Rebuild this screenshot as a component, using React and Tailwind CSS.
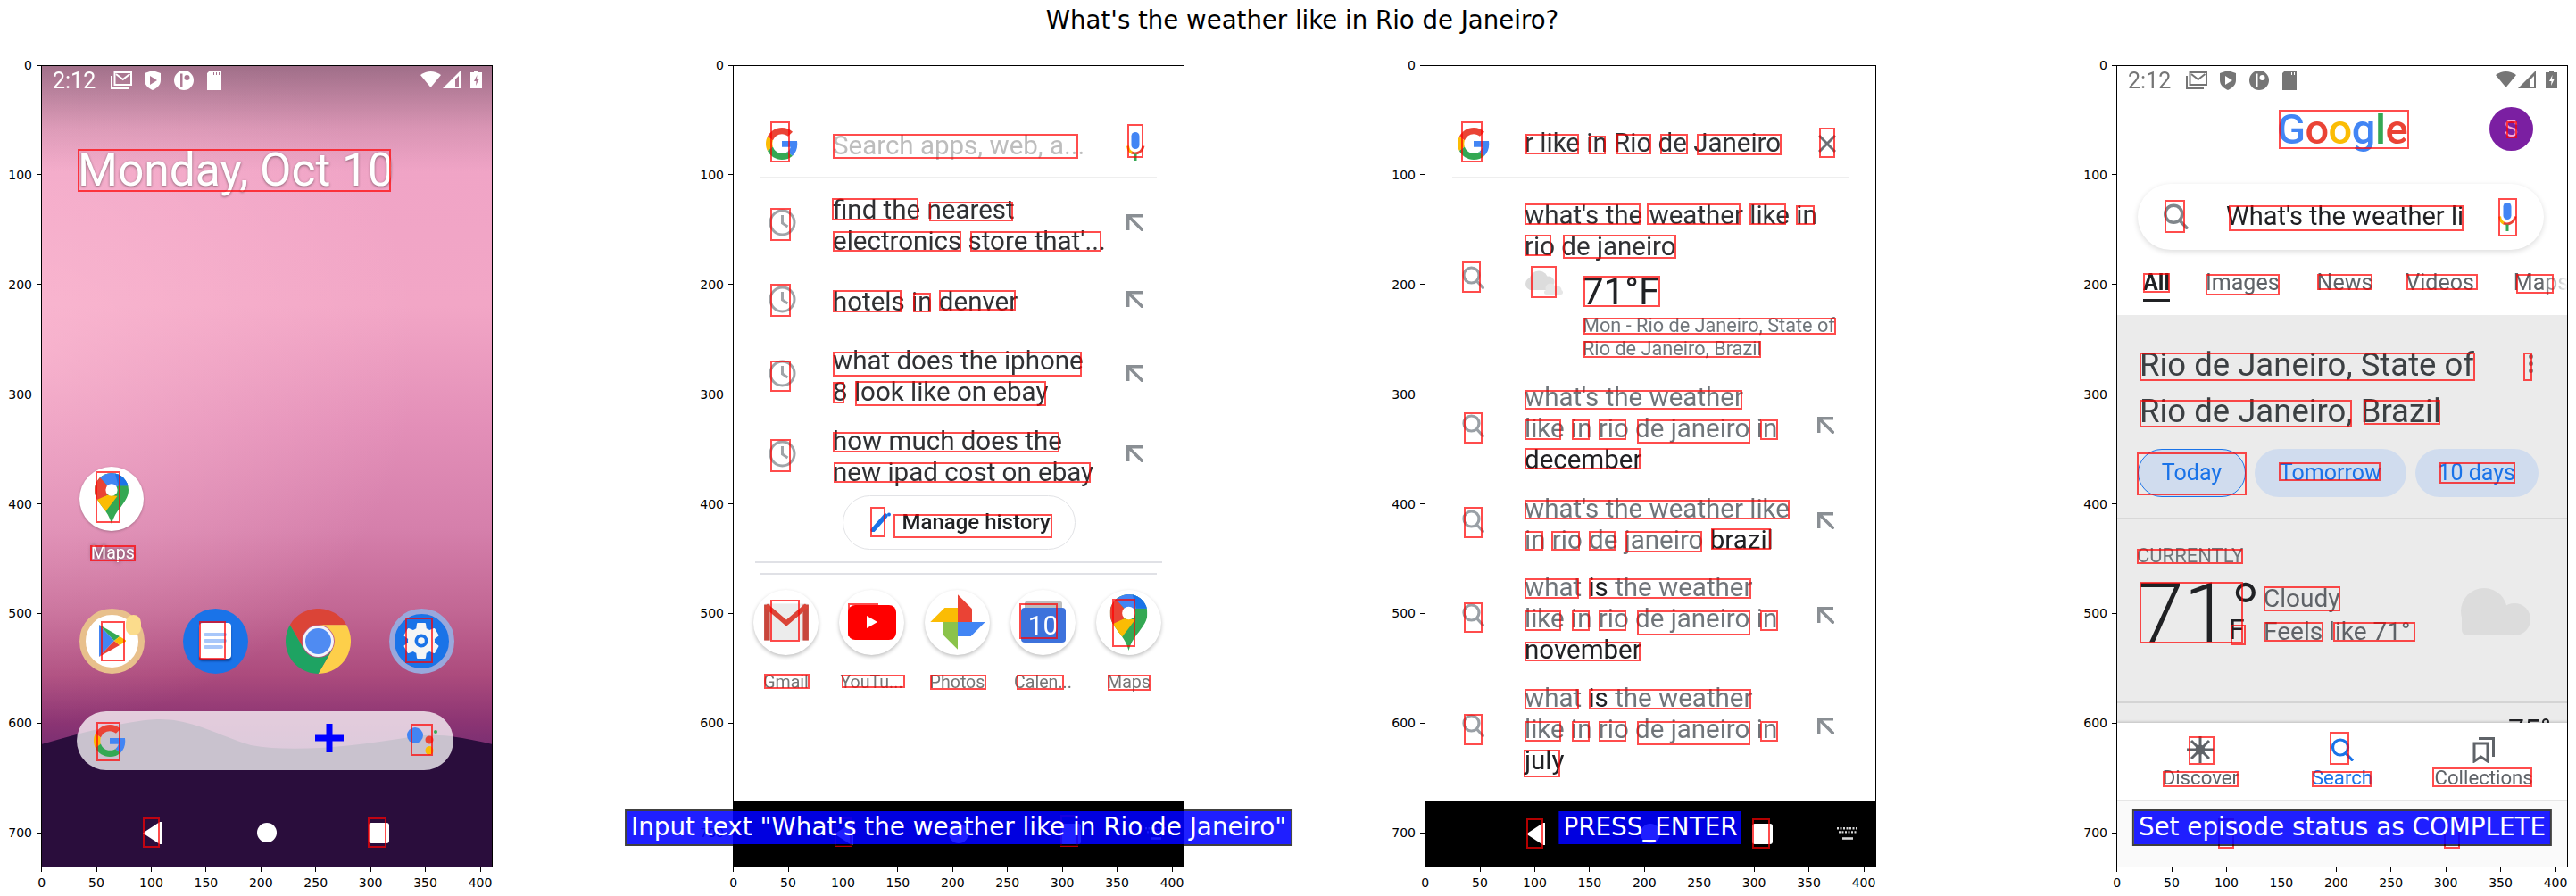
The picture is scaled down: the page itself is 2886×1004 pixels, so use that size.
import React, { useId } from "react";

const PANEL_TOP = 72.5;
const UNIT = 1.2285;

function GoogleG({ className }) {
  return (
    <svg viewBox="0 0 48 48" className={className}>
      <path fill="#EA4335" d="M24 9.5c3.54 0 6.71 1.22 9.21 3.6l6.85-6.85C35.9 2.38 30.47 0 24 0 14.62 0 6.51 5.38 2.56 13.22l7.98 6.19C12.43 13.72 17.74 9.5 24 9.5z" />
      <path fill="#4285F4" d="M46.98 24.55c0-1.57-.15-3.09-.38-4.55H24v9.02h12.94c-.58 2.96-2.26 5.48-4.78 7.18l7.73 6c4.51-4.18 7.09-10.36 7.09-17.65z" />
      <path fill="#FBBC05" d="M10.53 28.59c-.48-1.45-.76-2.99-.76-4.59s.27-3.14.76-4.59l-7.98-6.19C.92 16.46 0 20.12 0 24c0 3.88.92 7.54 2.56 10.78l7.97-6.19z" />
      <path fill="#34A853" d="M24 48c6.48 0 11.93-2.13 15.89-5.81l-7.73-6c-2.15 1.45-4.92 2.3-8.16 2.3-6.26 0-11.57-4.22-13.47-9.91l-7.98 6.19C6.51 42.62 14.62 48 24 48z" />
    </svg>
  );
}

function MapsPin({ className }) {
  const id = useId();
  return (
    <svg viewBox="0 0 40 60" className={className}>
      <clipPath id={id}>
        <path d="M20 0C9 0 0 9 0 20c0 8 4 13 9 20 5 6 9 12 11 20 2-8 6-14 11-20 5-7 9-12 9-20C40 9 31 0 20 0z" />
      </clipPath>
      <g clipPath={`url(#${id})`}>
        <rect width="40" height="60" fill="#34A853" />
        <polygon points="0,31 15,26 27,27 11,48 0,48" fill="#FBBC04" />
        <polygon points="0,0 7,5 15,15 15,26 0,33" fill="#EA4335" />
        <polygon points="6,5 18,-2 40,0 40,15 28,15 20,20" fill="#4285F4" />
        <polygon points="24,0 40,0 40,15 28,15" fill="#1A73E8" />
      </g>
      <circle cx="20" cy="20" r="7" fill="#fff" />
    </svg>
  );
}

function Mic({ className }) {
  return (
    <svg viewBox="0 0 22 32" className={className}>
      <rect x="6.5" y="0" width="9" height="19" rx="4.5" fill="#4285F4" />
      <path d="M8 23.5c-3-1-5-4-5.5-8" fill="none" stroke="#FBBC04" strokeWidth="3" />
      <path d="M7 23c4 2 11 1 13-7.5" fill="none" stroke="#EA4335" strokeWidth="3" />
      <rect x="9.5" y="24.5" width="3" height="7.5" fill="#34A853" />
    </svg>
  );
}

function SearchGlass({ className, stroke = "#9aa0a6" }) {
  return (
    <svg viewBox="0 0 25 26" className={className} fill="none" stroke={stroke} strokeWidth="3.2">
      <circle cx="10.5" cy="10.5" r="8.5" />
      <path d="M16.5 17l8 8.5" />
    </svg>
  );
}

function Clock() {
  return (
    <svg viewBox="0 0 31 31" className="w-[31px] h-[31px] shrink-0" fill="none" stroke="#a0a4a8" strokeWidth="3">
      <circle cx="15.5" cy="15.5" r="13.5" />
      <path d="M15.5 7v9l6 4" />
    </svg>
  );
}

function NwArrow() {
  return (
    <svg viewBox="0 0 19 19" className="w-[19px] h-[19px] shrink-0" fill="none" stroke="#8a8f94" strokeWidth="3.5">
      <path d="M1.7 18V1.7H18M1.7 1.7L18.5 18.5" />
    </svg>
  );
}

function Cloud({ className }) {
  return (
    <svg viewBox="0 0 78 53" className={className} fill="#dcdcdc">
      <circle cx="26" cy="26" r="26" />
      <circle cx="60" cy="35" r="18" />
      <rect x="1" y="28" width="59" height="25" rx="6" />
    </svg>
  );
}

function StatusBar({ tone }) {
  return (
    <div className={`flex items-center h-[35px] pl-[13px] pr-[12px] ${tone}`}>
      <span className="w-[65px] text-[25px] leading-[35px]">2:12</span>
      <svg viewBox="0 0 24 20" className="w-[24px] h-[20px] mr-[14px]" fill="none" stroke="currentColor" strokeWidth="2">
        <path d="M1 5v14h19" />
        <rect x="4.5" y="1" width="18.5" height="14" />
        <path d="M6 3l7.7 6 7.7-6" />
      </svg>
      <svg viewBox="0 0 18 22" className="w-[18px] h-[22px] mr-[15px]" fill="currentColor">
        <path fillRule="evenodd" d="M9 0l9 3v8c0 6-5 9-9 11-4-2-9-5-9-11V3z M6 6v10l8-5z" />
      </svg>
      <svg viewBox="0 0 22 22" className="w-[22px] h-[22px] mr-[15px]" fill="currentColor">
        <path fillRule="evenodd" d="M11 0a11 11 0 1 1 0 22a11 11 0 1 1 0-22z M7 3.5v15h2.5v-15z M14.5 5a3 3 0 1 0 0 6a3 3 0 1 0 0-6z" />
      </svg>
      <svg viewBox="0 0 16 22" className="w-[16px] h-[22px]" fill="currentColor">
        <path fillRule="evenodd" d="M3 0h13v22H0V3z M7 2v3h1V2z M10 2v3h1V2z M13 2v3h1V2z" />
      </svg>
      <div className="ml-auto flex items-center mb-[3px]">
        <svg viewBox="0 0 23 19" className="w-[23px] h-[19px] mr-[2px]" fill="currentColor">
          <path d="M0 5Q11.5-3 23 5L11.5 19z" />
        </svg>
        <svg viewBox="0 0 20 20" className="w-[20px] h-[20px] mr-[11px]" fill="currentColor">
          <path fillRule="evenodd" d="M20 0v20H0z M18 6v12h-4V10z" />
        </svg>
        <svg viewBox="0 0 13 20" className="w-[13px] h-[20px]" fill="currentColor">
          <path fillRule="evenodd" d="M4 0h5v2h4v18H0V2h4z M7.5 5L4 12h2.5L6 17l3.5-7H7z" />
        </svg>
      </div>
    </div>
  );
}

function NavKeys({ keyboard }) {
  return (
    <div className="flex items-center pl-[114px] h-full">
      <svg viewBox="0 0 21 25" className="w-[21px] h-[25px]" fill="#fff">
        <path d="M0 12.5L19 0h2v25h-2z" />
      </svg>
      <div className="w-[22px] h-[22px] rounded-full bg-white ml-[107px]" />
      <div className="w-[23px] h-[23px] rounded-[3px] bg-white ml-[103px]" />
      {keyboard && (
        <svg viewBox="0 0 24 14" className="w-[24px] h-[14px] ml-[72px]" fill="none" stroke="#d8d8d8">
          <path strokeWidth="2.4" strokeDasharray="2 1.5" d="M0 1.2h24M2 5.4h21" />
          <path strokeWidth="2.6" d="M6 12.5h12" />
        </svg>
      )}
    </div>
  );
}

function Panel({ left, boxes, caption, marker, children }) {
  return (
    <div className="relative w-[506px] h-[899px] shrink-0">
      <div className="w-full h-full overflow-hidden">{children}</div>
      {boxes.map((b, i) => (
        <div
          key={i}
          className="absolute border-2 border-[#ff0000]/70"
          style={{ left: b[0] - left, top: b[1] - PANEL_TOP, width: b[2] - b[0], height: b[3] - b[1] }}
        />
      ))}
      {marker}
      <div className="absolute inset-0 border border-black pointer-events-none" />
      {[0, 100, 200, 300, 400, 500, 600, 700].map((v) => (
        <div key={v} className="absolute right-full flex items-center h-[14px] -mt-[7px]" style={{ top: 0.6 + v * UNIT }}>
          <span className="text-[14px] leading-[14px] text-black mr-[5px] font-['DejaVu_Sans',sans-serif]">{v}</span>
          <div className="w-[5px] h-px bg-black" />
        </div>
      ))}
      {[0, 50, 100, 150, 200, 250, 300, 350, 400].map((v) => (
        <div key={v} className="absolute top-full flex flex-col items-center w-[40px] -ml-[20px]" style={{ left: 0.6 + v * UNIT }}>
          <div className="w-px h-[5px] bg-black" />
          <span className="text-[14px] leading-[14px] text-black mt-[5px] font-['DejaVu_Sans',sans-serif]">{v}</span>
        </div>
      ))}
      {caption && (
        <div className="absolute left-1/2 -translate-x-1/2 top-[834px] h-[41px] flex items-center px-[5px] border-2 border-black/75 bg-[rgba(0,0,255,0.88)] bg-clip-padding text-white text-[27.8px] leading-[38px] whitespace-nowrap font-['DejaVu_Sans',sans-serif]">
          {caption}
        </div>
      )}
    </div>
  );
}

function HomeScreen() {
  return (
    <div className="relative w-full h-full blur-[0.5px] bg-[linear-gradient(180deg,rgba(70,50,70,0.45)_0px,rgba(70,50,70,0.12)_70px,rgba(70,50,70,0)_120px),radial-gradient(ellipse_420px_420px_at_0px_320px,rgba(255,195,215,0.55),rgba(255,195,215,0)),linear-gradient(180deg,#e89fbe_0%,#f0a4c6_12%,#f2a6c6_30%,#e38fb8_45%,#d57fab_58%,#c26794_68%,#ac4b7d_76%,#8b3473_82%,#6a2a72_88%,#5a2466_100%)]">
      <svg viewBox="0 0 506 899" className="absolute inset-0 w-full h-full">
        <path d="M0 761C40 750 90 735 130 733C170 732 200 752 235 762C280 770 340 765 420 752C450 748 480 755 506 761V899H0z" fill="#2a0d3c" />
      </svg>
      <div className="relative flex flex-col h-full">
        <StatusBar tone="text-white" />
        <div className="mt-[59px] pl-[41px] h-[48px] leading-[48px] text-[51.5px] text-white [text-shadow:0_1px_3px_rgba(0,0,0,0.45)]">Monday, Oct 10</div>
        <div className="mt-[308px] ml-[43px] w-[72px] h-[72px] rounded-full bg-white flex items-center justify-center shadow-[0_1px_3px_rgba(0,0,0,0.25)]">
          <MapsPin className="w-[38px] h-[57px]" />
        </div>
        <div className="mt-[16px] ml-[43px] w-[75px] h-[18px] text-center leading-[18px] text-[19.6px] text-white [text-shadow:0_0_5px_rgba(0,0,0,0.7)]">Maps</div>
        <div className="mt-[53px] pl-[43px] flex gap-[42.5px]">
          <div className="relative w-[73px] h-[73px] rounded-full bg-white border-[7px] border-[#e8c08c] flex items-center justify-center">
            <svg viewBox="0 0 30 36" className="w-[30px] h-[36px]">
              <polygon points="0,0 17,18 0,36" fill="#4285F4" />
              <polygon points="0,0 23,13 17,18" fill="#34A853" />
              <polygon points="0,36 23,23 17,18" fill="#EA4335" />
              <polygon points="23,13 31,18 23,23 17,18" fill="#FBBC04" />
            </svg>
            <div className="absolute right-[-3px] top-[0px] w-[17px] h-[23px] rounded-full bg-[#fbdc8c]" />
          </div>
          <div className="w-[73px] h-[73px] rounded-full bg-[#1a73e8] flex items-center justify-center">
            <div className="w-[36px] h-[40px] rounded-[4px] bg-white flex flex-col justify-center gap-[3px] px-[5px] shadow-[0_3px_2px_rgba(0,30,90,0.5)]">
              <div className="h-[4px] rounded bg-[#a8c7fa]" />
              <div className="h-[4px] rounded bg-[#a8c7fa]" />
              <div className="h-[4px] rounded bg-[#a8c7fa] mr-[4px]" />
            </div>
          </div>
          <svg viewBox="0 0 48 48" className="w-[73px] h-[73px]">
            <path fill="#DB4437" d="M3.2 12A24 24 0 0 1 44.8 12H24A12 12 0 0 0 13.6 30z" />
            <path fill="#FDCF4A" d="M44.8 12A24 24 0 0 1 24 48L34.4 30A12 12 0 0 0 24 12z" />
            <path fill="#1EA362" d="M24 48A24 24 0 0 1 3.2 12L13.6 30A12 12 0 0 0 34.4 30z" />
            <circle cx="24" cy="24" r="11.5" fill="#f4f4f8" />
            <circle cx="24" cy="24" r="9.5" fill="#4F8BF2" />
          </svg>
          <div className="w-[73px] h-[73px] rounded-full bg-[#1a73e8] border-[6px] border-[#99a8dc] flex items-center justify-center">
            <svg viewBox="0 0 24 24" className="w-[50px] h-[50px]">
              <path fill="#f5f5f5" fillRule="evenodd" d="M19.14 12.94c.04-.3.06-.61.06-.94 0-.32-.02-.64-.07-.94l2.03-1.58a.49.49 0 0 0 .12-.61l-1.92-3.32a.49.49 0 0 0-.59-.22l-2.39.96c-.5-.38-1.03-.7-1.62-.94l-.36-2.54a.48.48 0 0 0-.48-.41h-3.84c-.24 0-.43.17-.47.41l-.36 2.54c-.59.24-1.13.57-1.62.94l-2.39-.96a.49.49 0 0 0-.59.22L2.74 8.87c-.12.21-.08.47.12.61l2.03 1.58c-.05.3-.09.63-.09.94s.02.64.07.94l-2.03 1.58a.49.49 0 0 0-.12.61l1.92 3.32c.12.22.37.29.59.22l2.39-.96c.5.38 1.03.7 1.62.94l.36 2.54c.05.24.24.41.48.41h3.84c.24 0 .44-.17.47-.41l.36-2.54c.59-.24 1.13-.56 1.62-.94l2.39.96c.22.08.47 0 .59-.22l1.92-3.32c.12-.22.07-.47-.12-.61l-2.01-1.58zM12 15.6A3.6 3.6 0 1 1 12 8.4a3.6 3.6 0 0 1 0 7.2z" />
              <circle cx="12" cy="12" r="1.8" fill="#f5f5f5" />
            </svg>
          </div>
        </div>
        <div className="mt-[42px] ml-[40px] w-[422px] h-[66px] rounded-full bg-white/75 flex items-center pl-[19px] pr-[18px]">
          <GoogleG className="w-[36px] h-[36px]" />
          <svg viewBox="0 0 34 32" className="w-[34px] h-[32px] ml-auto">
            <circle cx="9" cy="10" r="9" fill="#4285F4" />
            <circle cx="25" cy="15" r="4.5" fill="#EA4335" />
            <ellipse cx="25" cy="27" rx="4.5" ry="5" fill="#FBBC04" />
            <circle cx="32" cy="6" r="2" fill="#34A853" />
          </svg>
        </div>
        <div className="h-[47px] mt-[47px]">
          <NavKeys />
        </div>
      </div>
    </div>
  );
}

function AppTile({ label, children }) {
  return (
    <div className="flex flex-col items-center w-[73px]">
      <div className="w-[73px] h-[73px] rounded-full bg-white flex items-center justify-center shadow-[0_2px_4px_rgba(0,0,0,0.25)]">{children}</div>
      <div className="mt-[22px] h-[18px] leading-[18px] text-[19.6px] text-[#757575] whitespace-nowrap">{label}</div>
    </div>
  );
}

function Suggestion({ mt, lines }) {
  return (
    <div className={`flex items-center pl-[40px] pr-[46px] ${mt}`}>
      <div className="mb-[6px]"><Clock /></div>
      <div className="ml-[41px] text-[29.5px] leading-[35px] text-[#303134] whitespace-nowrap">
        {lines.map((l) => <div key={l}>{l}</div>)}
      </div>
      <div className="ml-auto mb-[6px]"><NwArrow /></div>
    </div>
  );
}

function DrawerScreen() {
  return (
    <div className="flex flex-col w-full h-full bg-white blur-[0.5px]">
      <div className="mx-[31px] h-[127px] border-b-[2px] border-[#eeeeee] pt-[70px]">
        <div className="flex items-center h-[36px] pl-[6px] pr-[13px]">
          <GoogleG className="w-[36px] h-[36px]" />
          <span className="ml-[39px] mt-[6px] text-[29.5px] text-[#bdbdbd] whitespace-nowrap">Search apps, web, a...</span>
          <Mic className="w-[22px] h-[32px] ml-auto mt-[6px]" />
        </div>
      </div>
      <Suggestion mt="mt-[18px]" lines={["find the nearest", "electronics store that'..."]} />
      <Suggestion mt="mt-[32px]" lines={["hotels in denver"]} />
      <Suggestion mt="mt-[30px]" lines={["what does the iphone", "8 look like on ebay"]} />
      <Suggestion mt="mt-[20px]" lines={["how much does the", "new ipad cost on ebay"]} />
      <div className="mx-auto mt-[8px] w-[261px] h-[61px] rounded-full border-[1.5px] border-[#e2e3e6] flex items-center pl-[30px]">
        <svg viewBox="0 0 23 22" className="w-[23px] h-[22px]">
          <path d="M3 20L17 4" stroke="#1a73e8" strokeWidth="5" strokeLinecap="round" />
          <circle cx="21" cy="2.5" r="2" fill="#1a73e8" />
        </svg>
        <span className="ml-[13px] text-[24px] font-medium text-[#202124] whitespace-nowrap">Manage history</span>
      </div>
      <div className="mt-[13px] mx-[25px] border-t-[2px] border-[#e0e1e6]" />
      <div className="mt-[11px] mx-[31px] border-t-[2px] border-[#e0e1e6]" />
      <div className="mt-[17px] pl-[23px] flex gap-[23px]">
        <AppTile label="Gmail">
          <svg viewBox="0 0 48 40" className="w-[52px] h-[44px]">
            <rect x="2" y="1" width="44" height="38" fill="#ececec" />
            <rect x="1" y="2" width="6" height="37" fill="#c8463c" />
            <rect x="41" y="2" width="6" height="37" fill="#c8463c" />
            <path d="M3 3l21 18L45 3" fill="none" stroke="#db4437" strokeWidth="5" />
          </svg>
        </AppTile>
        <AppTile label="YouTu...">
          <div className="w-[54px] h-[39px] rounded-[8px] bg-[#ff0000] flex items-center justify-center">
            <svg viewBox="0 0 12 14" className="w-[12px] h-[14px]"><path d="M0 0l12 7-12 7z" fill="#fff" /></svg>
          </div>
        </AppTile>
        <AppTile label="Photos">
          <svg viewBox="0 0 48 48" className="w-[64px] h-[64px]">
            <path fill="#EA4335" d="M24 24V1L36 13V24z" />
            <path fill="#4285F4" d="M24 24H47L35 36H24z" />
            <path fill="#8BC34A" d="M24 24V47L12 35V24z" />
            <path fill="#FBBC04" d="M24 24H1L13 12H24z" />
          </svg>
        </AppTile>
        <AppTile label="Calen...">
          <div className="w-[50px] h-[46px] flex flex-col">
            <div className="h-[7px] mx-[4px] bg-[#bdbdbd] rounded-t-[2px]" />
            <div className="flex-1 rounded-[4px] bg-[#3d72dc] flex items-center justify-center text-white text-[30px] leading-[30px]">10</div>
          </div>
        </AppTile>
        <AppTile label="Maps">
          <MapsPin className="w-[43px] h-[63px]" />
        </AppTile>
      </div>
      <div className="mt-auto h-[75px] bg-black"><NavKeys keyboard /></div>
    </div>
  );
}

function ResultRow({ mt, children }) {
  return (
    <div className={`flex items-center pl-[42px] pr-[47px] ${mt}`}>
      <div className="mb-[8px]"><SearchGlass className="w-[25px] h-[26px]" /></div>
      <div className="ml-[45px] text-[29.5px] leading-[35px] text-[#70757a] whitespace-nowrap">{children}</div>
      <div className="ml-auto mb-[8px]"><NwArrow /></div>
    </div>
  );
}

const Dark = ({ children }) => <span className="text-[#202124]">{children}</span>;

function TypingScreen() {
  return (
    <div className="flex flex-col w-full h-full bg-white blur-[0.5px]">
      <div className="mx-[31px] h-[127px] border-b-[2px] border-[#eeeeee] pt-[70px]">
        <div className="flex items-center h-[36px] pl-[6px] pr-[14px]">
          <GoogleG className="w-[36px] h-[36px]" />
          <span className="ml-[39px] text-[29.5px] text-[#303134] whitespace-nowrap">r like in Rio de Janeiro</span>
          <svg viewBox="0 0 20 20" className="w-[20px] h-[20px] ml-auto" fill="none" stroke="#6c7075" strokeWidth="3">
            <path d="M1 1l18 18M19 1L1 19" />
          </svg>
        </div>
      </div>
      <div className="flex items-center pl-[42px] mt-[24px]">
        <div className="mb-[6px]"><SearchGlass className="w-[25px] h-[26px]" /></div>
        <div className="ml-[45px] whitespace-nowrap">
          <div className="text-[29.5px] leading-[35px] text-[#303134]">
            <div>what's the weather like in</div>
            <div>rio de janeiro</div>
          </div>
          <div className="flex mt-[8px]">
            <svg viewBox="0 0 44 28" className="w-[44px] h-[28px] mt-[1px]">
              <g fill="#dcdcdc">
                <circle cx="16" cy="11" r="10.5" />
                <circle cx="8" cy="15" r="7" />
                <circle cx="27" cy="13" r="6.5" />
                <rect x="4" y="12" width="28" height="10" rx="4" />
              </g>
              <g fill="#e6e6e6">
                <circle cx="29" cy="20" r="5.5" />
                <circle cx="37" cy="22" r="4.5" />
                <rect x="22" y="22" width="21" height="5" rx="2.5" />
              </g>
            </svg>
            <div className="ml-[21px]">
              <div className="text-[42px] leading-[50px] text-[#202124]">71°F</div>
              <div className="text-[21.7px] leading-[26px] text-[#70757a]">Mon - Rio de Janeiro, State of</div>
              <div className="text-[21.7px] leading-[26px] text-[#70757a]">Rio de Janeiro, Brazil</div>
            </div>
          </div>
        </div>
      </div>
      <ResultRow mt="mt-[24.5px]">
        <div>what's the weather</div>
        <div>like in rio de janeiro in</div>
        <Dark>december</Dark>
      </ResultRow>
      <ResultRow mt="mt-[19.5px]">
        <div>what's the weather like</div>
        <div>in rio de janeiro <Dark>brazil</Dark></div>
      </ResultRow>
      <ResultRow mt="mt-[18px]">
        <div>what <Dark>is</Dark> the weather</div>
        <div>like in rio de janeiro in</div>
        <Dark>november</Dark>
      </ResultRow>
      <ResultRow mt="mt-[19px]">
        <div>what <Dark>is</Dark> the weather</div>
        <div>like in rio de janeiro in</div>
        <Dark>july</Dark>
      </ResultRow>
      <div className="mt-auto h-[75px] bg-black"><NavKeys keyboard /></div>
    </div>
  );
}

function Chip({ w, active, children }) {
  return (
    <div className={`${w} h-[54px] rounded-[27px] bg-[#d0dcee] flex items-center justify-center text-[25px] text-[#1a73e8] ${active}`}>{children}</div>
  );
}

function NavTab({ label, tone, children }) {
  return (
    <div className="flex flex-col items-center">
      <div className="h-[32px] flex items-center justify-center">{children}</div>
      <div className={`mt-[3px] h-[24px] leading-[24px] text-[22.2px] ${tone}`}>{label}</div>
    </div>
  );
}

function ResultsScreen() {
  return (
    <div className="flex flex-col w-full h-full bg-white blur-[0.5px]">
      <StatusBar tone="text-[#757575]" />
      <div className="mt-[12px] h-[49px] grid grid-cols-[1fr_auto_1fr] items-center">
        <div />
        <div className="text-[47px] leading-[49px] tracking-[-0.5px] font-medium">
          <span className="text-[#4285f4]">G</span>
          <span className="text-[#ea4335]">o</span>
          <span className="text-[#fbbc05]">o</span>
          <span className="text-[#4285f4]">g</span>
          <span className="text-[#34a853]">l</span>
          <span className="text-[#ea4335]">e</span>
        </div>
        <div className="flex justify-end pr-[39px]">
          <div className="w-[49px] h-[49px] rounded-full bg-[#7b1fa2] text-[#f5a5d5] flex items-center justify-center text-[26px]">S</div>
        </div>
      </div>
      <div className="mt-[37px] ml-[24px] w-[455px] h-[74px] shrink-0 rounded-full bg-white shadow-[0_2px_6px_rgba(0,0,0,0.14)] flex items-center pl-[28px]">
        <SearchGlass className="w-[29px] h-[29px]" stroke="#80868b" />
        <div className="ml-[42px] w-[266px] overflow-hidden whitespace-nowrap text-[29px] text-[#202124]">What's the weather like in Rio</div>
        <Mic className="ml-[38px] w-[22px] h-[32px]" />
      </div>
      <div className="relative h-[73px] shrink-0 pt-[22px] pl-[30px] flex text-[25px] leading-[30px] text-[#5f6368] overflow-hidden">
        <div className="font-bold text-[#202124] h-[37px]">
          <div>All</div>
          <div className="mt-[3px] h-[3.5px] bg-[#202124]" />
        </div>
        <div className="ml-[40px]">Images</div>
        <div className="ml-[42px]">News</div>
        <div className="ml-[37px]">Videos</div>
        <div className="ml-[44px]">Maps</div>
        <div className="absolute right-0 top-0 bottom-0 w-[30px] bg-gradient-to-r from-white/0 to-white" />
      </div>
      <div className="h-[457px] shrink-0 bg-[#ebebeb] overflow-hidden">
        <div className="mt-[30px] px-[26px] flex">
          <div className="text-[36.5px] leading-[52px] text-[#3c4043]">
            <div>Rio de Janeiro, State of</div>
            <div>Rio de Janeiro, Brazil</div>
          </div>
          <div className="ml-auto mr-[13px] mt-[14px] flex flex-col gap-[3px] h-[22px]">
            <div className="w-[5px] h-[5px] rounded-full bg-[#80868b]" />
            <div className="w-[5px] h-[5px] rounded-full bg-[#80868b]" />
            <div className="w-[5px] h-[5px] rounded-full bg-[#80868b]" />
          </div>
        </div>
        <div className="mt-[16px] pl-[24px] flex gap-[9.5px]">
          <Chip w="w-[121px]" active="border-[1.5px] border-[#1a73e8]">Today</Chip>
          <Chip w="w-[170.5px]" active="">Tomorrow</Chip>
          <Chip w="w-[138.5px]" active="">10 days</Chip>
        </div>
        <div className="mt-[23px] border-t-[2px] border-[#d8d8d8]" />
        <div className="mt-[31px] pl-[23px] h-[20px] leading-[20px] text-[22px] text-[#70757a]">CURRENTLY</div>
        <div className="mt-[8px] flex pl-[24px]">
          <div className="relative w-[141px] h-[93px] text-[93px] leading-[93px] font-light text-[#202124]">
            71°
            <span className="absolute left-[102px] top-[48px] text-[32px] leading-[32px] font-normal">F</span>
          </div>
          <div className="mt-[11px] text-[28px] leading-[37px] text-[#5f6368] whitespace-nowrap">
            <div>Cloudy</div>
            <div>Feels like 71°</div>
          </div>
          <Cloud className="ml-auto mr-[42px] mt-[18px] w-[78px] h-[53px]" />
        </div>
        <div className="mt-[52px] border-t-[2px] border-[#d4d4d4]" />
        <div className="mt-[13px] pr-[19px] text-right text-[32px] leading-[32px] text-[#202124]">75°</div>
      </div>
      <div className="relative h-[86px] shrink-0 bg-white shadow-[0_-1px_3px_rgba(0,0,0,0.2)] grid grid-cols-3 px-[15px] pt-[14px]">
        <NavTab label="Discover" tone="text-[#5f6368]">
          <svg viewBox="0 0 30 30" className="w-[30px] h-[30px]" fill="none" stroke="#5f6368" strokeWidth="3">
            <path d="M15 0v30M0 15h30M5 5l20 20M25 5L5 25" />
            <circle cx="15" cy="15" r="4" fill="#5f6368" />
          </svg>
        </NavTab>
        <NavTab label="Search" tone="text-[#1a73e8]">
          <SearchGlass className="w-[26px] h-[26px]" stroke="#1a73e8" />
        </NavTab>
        <NavTab label="Collections" tone="text-[#5f6368]">
          <svg viewBox="0 0 25 31" className="w-[25px] h-[31px]" fill="none" stroke="#5f6368" strokeWidth="3">
            <path d="M2 9h15v20l-7.5-5L2 29z" />
            <path d="M7 3.5h16.5V24" />
          </svg>
        </NavTab>
      </div>
      <div className="flex-1 bg-[#fafafa] border-t border-[#eeeeee]"><NavKeys /></div>
    </div>
  );
}

const homeBoxes = [
  [87, 167, 438, 215], [107, 528, 134.5, 586], [101, 611, 151.5, 629], [113, 696, 140, 741],
  [223, 696, 253, 739], [454, 692, 485, 743], [108, 809, 134.5, 853], [459.6, 811, 485, 847],
  [160, 916, 178.6, 950], [412, 916, 432.5, 950],
];

const drawerBoxes = [
  [862.6, 136, 885.5, 182], [933, 150, 1208, 178], [1262.5, 139, 1281, 177],
  [863, 233, 885.5, 270], [931.5, 222, 1028.6, 247], [1040.5, 226, 1134.7, 248], [933, 259, 1076.5, 282], [1087, 259, 1234, 282],
  [863, 318, 885.5, 355], [933, 325, 1009.5, 350], [1023, 328, 1043, 350], [1052, 325, 1138, 348],
  [863, 404, 885.5, 439], [933, 394, 1211.6, 422], [933, 428, 946, 452], [958, 427, 1172, 455],
  [863, 492, 885.5, 529], [933, 484, 1187, 507], [933.6, 518, 1222, 541],
  [975.4, 568, 992, 602], [1001.4, 576, 1179.5, 603],
  [862.6, 671.7, 896, 719], [950, 676, 983.6, 712.7], [1142, 676, 1184.6, 716], [1246, 671, 1272, 725],
  [855.5, 755, 906.5, 772], [943, 756, 1013.7, 771], [1041.7, 756, 1105.5, 772.7], [1138.7, 756, 1191.7, 772.7], [1240.7, 756, 1288.7, 773.7],
  [934.6, 916, 954, 949], [1187.6, 913, 1208, 948.7],
];

const typingBoxes = [
  [1637, 136, 1660.5, 182], [1709, 150, 1768.5, 172.7], [1779.6, 152, 1799.5, 173], [1810.6, 150, 1849.6, 172.7],
  [1860, 150, 1890.5, 172.7], [1901, 150, 1996, 173.7], [2037.5, 143, 2055.5, 176.7],
  [1708, 228, 1837.7, 251.7], [1845, 228, 1949.5, 251.7], [1960, 228, 2000.8, 251.7], [2012, 230, 2033, 251.7],
  [1708, 263, 1738, 286.7], [1750.5, 263, 1877.5, 290],
  [1638, 293, 1658.6, 328], [1714.5, 297.7, 1744, 333.7], [1773.5, 309, 1859.6, 344], [1773.5, 356, 2057, 374.7], [1773.5, 382, 1973, 400.7],
  [1640, 462, 1660.5, 497], [1708, 436.7, 1951.8, 458.7], [1708, 470, 1749, 492.7], [1761, 470, 1781, 492.7], [1791.4, 470, 1821.7, 492.7], [1833.5, 470, 1961, 497], [1972, 470, 1991.6, 492.7], [1708, 502, 1837.7, 526],
  [1640, 568, 1660.5, 603], [1708, 560, 2004.6, 582], [1708, 595, 1728.7, 616.7], [1737.5, 595, 1769.6, 616.7], [1779.6, 595, 1809.8, 616.7], [1821, 595, 1907.4, 619], [1917, 592, 1984, 615.7],
  [1640, 675, 1660.5, 709], [1708, 648, 1768.5, 670.7], [1779.6, 648, 1961.7, 670.7], [1708, 684, 1749, 706.7], [1761, 684, 1781, 706.7], [1791.4, 684, 1821.7, 706.7], [1833.5, 684, 1961, 711.7], [1972, 684, 1991.6, 706.7], [1708, 719, 1837.7, 741],
  [1640, 800, 1660.5, 835], [1708, 772, 1768.5, 794.7], [1779.6, 772, 1961.7, 794.7], [1708, 808, 1749, 830.7], [1761, 808, 1781, 830.7], [1791.4, 808, 1821.7, 830.7], [1833.5, 808, 1961, 835], [1972, 808, 1991.6, 830.7], [1706.5, 840, 1747.8, 870.7],
  [1709.5, 916.7, 1728.7, 950.7], [1962.5, 916.7, 1982.8, 950.7],
];

const resultBoxes = [
  [2553, 123, 2698.7, 167], [2808, 136, 2820, 155], [2425.4, 224, 2447.8, 260.7], [2497, 230, 2760, 258.7], [2799.4, 222, 2820, 264.7],
  [2401, 306, 2431, 327.7], [2471, 307, 2553.6, 330.7], [2596, 307, 2658, 325], [2695.5, 307, 2775.6, 325], [2818.6, 307, 2860.8, 329],
  [2397, 395, 2772.7, 426.7], [2826.5, 395, 2836.6, 426.7], [2397, 448, 2634.8, 479], [2648, 448, 2733.7, 475.7],
  [2394, 506.7, 2516.7, 555], [2553, 518, 2666.6, 539], [2732.6, 518, 2817.8, 541.7],
  [2394, 615, 2512.8, 631.7], [2397, 652, 2512.8, 721], [2498.7, 700, 2515.7, 723], [2536, 657, 2621.8, 684.7], [2536, 696.7, 2602.7, 718.7], [2614, 696.7, 2705.6, 718.7],
  [2452, 825, 2481, 856.7], [2423, 864, 2507.7, 881.7], [2609.5, 820, 2631.5, 856.7], [2590.4, 864, 2657.5, 881.7], [2725.4, 860, 2836.6, 881.7],
  [2484.6, 916.7, 2502.7, 950.7], [2737.7, 916.7, 2756.5, 950.7],
];

export default function App() {
  return (
    <div className="w-[2886px] h-[1004px] overflow-hidden bg-white font-['DejaVu_Sans',sans-serif]">
      <div className="h-[72.5px] pt-[6px] pl-[32px] text-center text-[27.6px] leading-[34px] text-black">What's the weather like in Rio de Janeiro?</div>
      <div className="flex pl-[46px] gap-[269px] font-['Roboto',sans-serif]">
        <Panel
          left={46}
          boxes={homeBoxes}
          marker={
            <svg viewBox="0 0 32 32" className="absolute left-[306.5px] top-[738.5px] w-[32px] h-[32px]" fill="#0000ff">
              <rect x="12.5" y="0" width="7" height="32" />
              <rect x="0" y="12.5" width="32" height="7" />
            </svg>
          }
        >
          <HomeScreen />
        </Panel>
        <Panel left={821} boxes={drawerBoxes} caption={`Input text "What's the weather like in Rio de Janeiro"`}>
          <DrawerScreen />
        </Panel>
        <Panel left={1596} boxes={typingBoxes} caption="PRESS_ENTER">
          <TypingScreen />
        </Panel>
        <Panel left={2371} boxes={resultBoxes} caption="Set episode status as COMPLETE">
          <ResultsScreen />
        </Panel>
      </div>
    </div>
  );
}
